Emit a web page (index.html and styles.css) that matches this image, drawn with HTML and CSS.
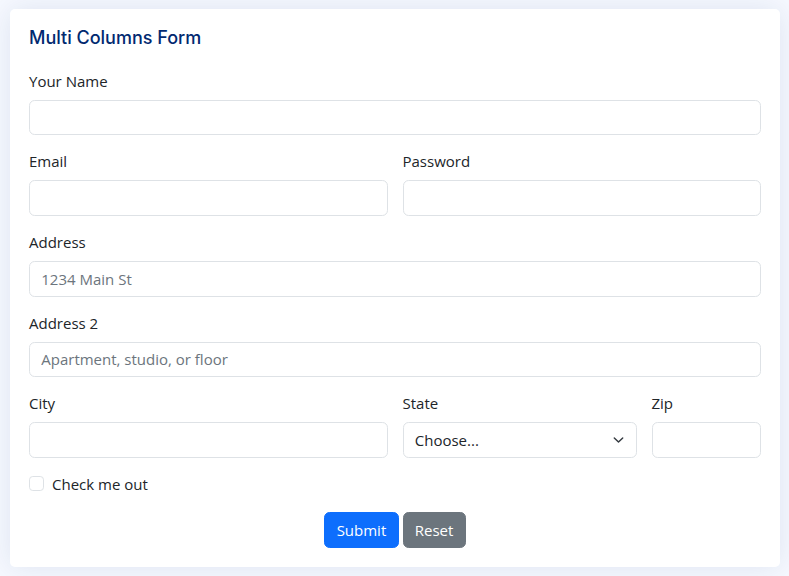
FILE: index.html
```html
<!DOCTYPE html>
<html lang="en">
<head>
<meta charset="utf-8">
<title>Multi Columns Form</title>
<link rel="stylesheet" href="styles.css">
</head>
<body>
<div class="card">
  <h5 class="card-title">Multi Columns Form</h5>
  <form class="form">
    <div class="field span-12">
      <label class="form-label" for="name">Your Name</label>
      <input class="form-control" id="name" type="text">
    </div>
    <div class="field span-6">
      <label class="form-label" for="email">Email</label>
      <input class="form-control" id="email" type="email">
    </div>
    <div class="field span-6">
      <label class="form-label" for="pass">Password</label>
      <input class="form-control" id="pass" type="password">
    </div>
    <div class="field span-12">
      <label class="form-label" for="addr">Address</label>
      <input class="form-control" id="addr" type="text" placeholder="1234 Main St">
    </div>
    <div class="field span-12">
      <label class="form-label" for="addr2">Address 2</label>
      <input class="form-control" id="addr2" type="text" placeholder="Apartment, studio, or floor">
    </div>
    <div class="field span-6">
      <label class="form-label" for="city">City</label>
      <input class="form-control" id="city" type="text">
    </div>
    <div class="field span-4">
      <label class="form-label" for="state">State</label>
      <div class="select-wrap">
        <select class="form-select" id="state">
          <option selected>Choose...</option>
          <option>...</option>
        </select>
        <svg class="chevron" viewBox="0 0 16 16" width="15" height="15" aria-hidden="true"><path fill="none" stroke="#343a40" stroke-linecap="round" stroke-linejoin="round" stroke-width="2" d="m2 5 6 6 6-6"/></svg>
      </div>
    </div>
    <div class="field span-2">
      <label class="form-label" for="zip">Zip</label>
      <input class="form-control" id="zip" type="text">
    </div>
    <div class="field span-12">
      <div class="form-check">
        <input class="form-check-input" type="checkbox" id="check">
        <label class="form-check-label" for="check">Check me out</label>
      </div>
    </div>
    <div class="field span-12 actions">
      <button type="submit" class="btn btn-primary">Submit</button>
      <button type="reset" class="btn btn-secondary">Reset</button>
    </div>
  </form>
</div>
</body>
</html>
```

FILE: styles.css
```css
* { box-sizing: border-box; }

html, body {
  margin: 0;
  background: #f6f9ff;
}

body {
  padding: 9px 9px 9px 10px;
  font-family: "Open Sans", "Noto Sans", sans-serif;
  font-size: 15px;
  line-height: 1.5;
  color: #212529;
}

.card {
  background: #fff;
  border-radius: 5px;
  box-shadow: 0 0 30px rgba(1, 41, 112, 0.1);
  padding: 0 19px 19px 19px;
}

.card-title {
  margin: 0 0 7.5px 0;
  padding: 18.75px 0 14.25px 0;
  font-family: "Inter", "Noto Sans", sans-serif;
  font-size: 18px;
  font-weight: 500;
  line-height: 20.25px;
  color: #012970;
}

.form {
  display: grid;
  grid-template-columns: repeat(12, 1fr);
  column-gap: 15px;
  row-gap: 15px;
}

.span-12 { grid-column: span 12; }
.span-6 { grid-column: span 6; }
.span-4 { grid-column: span 4; }
.span-2 { grid-column: span 2; }

.form-label {
  display: block;
  margin-bottom: 7.5px;
  line-height: 22.5px;
}

.form-control,
.form-select {
  display: block;
  width: 100%;
  height: 35.6px;
  padding: 5.6px 11.25px;
  font-family: inherit;
  font-size: 15px;
  line-height: 22.5px;
  color: #212529;
  background: #fff;
  border: 1px solid #dee2e6;
  border-radius: 5.6px;
  outline: none;
  margin: 0;
}

.form-control::placeholder {
  color: #6c757d;
  opacity: 1;
}

.select-wrap {
  position: relative;
}

.form-select {
  appearance: none;
  -webkit-appearance: none;
  padding-right: 36px;
}

.chevron {
  position: absolute;
  right: 11px;
  top: 50%;
  width: 15px;
  height: 11.25px;
  transform: translateY(-50%);
  pointer-events: none;
}

.form-check {
  display: flex;
  align-items: flex-start;
  min-height: 22.5px;
  margin-bottom: 1.9px;
}

.form-check-input {
  appearance: none;
  -webkit-appearance: none;
  width: 15px;
  height: 15px;
  margin: 3.75px 8px 0 0;
  border: 1px solid #dee2e6;
  border-radius: 3.75px;
  background: #fff;
  flex: none;
}

.form-check-label {
  line-height: 22.5px;
}

.actions {
  display: flex;
  justify-content: center;
  gap: 4px;
}

.btn {
  height: 35.6px;
  padding: 5.6px 11.25px;
  font-family: inherit;
  font-size: 15px;
  line-height: 22.5px;
  border: 1px solid transparent;
  border-radius: 5.6px;
  color: #fff;
  cursor: pointer;
}

.btn-primary {
  background: #0d6efd;
  border-color: #0d6efd;
}

.btn-secondary {
  background: #6c757d;
  border-color: #6c757d;
}
```
